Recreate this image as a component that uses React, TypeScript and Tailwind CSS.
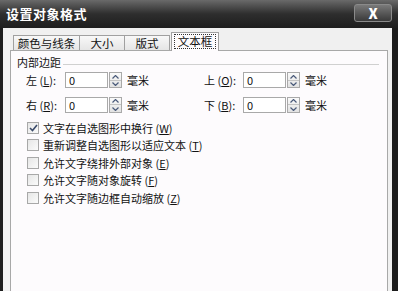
import React from 'react';

const font = { fontFamily: '"Noto Sans CJK SC", "Noto Sans", sans-serif' };

function Key({ k }: { k: string }) {
  return (
    <span>
      (<span className="underline">{k}</span>)
    </span>
  );
}

function Spin() {
  return (
    <div className="ml-px flex h-[16px] w-[13px] flex-col border border-[#a9a9a9] bg-gradient-to-b from-[#fafafa] to-[#e2e2e2]">
      <div className="flex flex-1 items-center justify-center border-b border-[#c4c4c4]">
        <svg width="7" height="4" viewBox="0 0 7 4">
          <path d="M0.5 3.5 L3.5 0.5 L6.5 3.5" fill="none" stroke="#4a5a7a" strokeWidth="1.2" />
        </svg>
      </div>
      <div className="flex flex-1 items-center justify-center">
        <svg width="7" height="4" viewBox="0 0 7 4">
          <path d="M0.5 0.5 L3.5 3.5 L6.5 0.5" fill="none" stroke="#4a5a7a" strokeWidth="1.2" />
        </svg>
      </div>
    </div>
  );
}

function MarginField({ label, k }: { label: string; k: string }) {
  return (
    <div className="flex items-center text-[11px] text-[#111]">
      <span className="w-[39px] whitespace-nowrap">
        {label} <Key k={k} />:
      </span>
      <div className="flex h-[16px] w-[43px] items-center border border-[#a9a9a9] bg-white pl-[3px] text-[11px]">0</div>
      <Spin />
      <span className="ml-[5px]">毫米</span>
    </div>
  );
}

function Check({ label, k, checked }: { label: string; k: string; checked?: boolean }) {
  return (
    <div className="flex h-[17.5px] items-center">
      <div className="flex h-[12px] w-[12px] items-center justify-center border border-[#a8a8a8] bg-gradient-to-br from-[#e6e6e6] to-[#fbfbfb]">
        {checked && (
          <svg width="9" height="8" viewBox="0 0 9 8">
            <path d="M1 4 L3.5 6.5 L8 1" fill="none" stroke="#3a4a6a" strokeWidth="1.6" />
          </svg>
        )}
      </div>
      <span className="ml-[4px] whitespace-nowrap text-[11px] text-[#111]">
        {label} <Key k={k} />
      </span>
    </div>
  );
}

export default function App() {
  const tabs = ['颜色与线条', '大小', '版式'];
  const widths = ['w-[67px]', 'w-[46px]', 'w-[46px]'];

  return (
    <div className="flex h-[291px] w-[398px] flex-col overflow-hidden bg-[#1c1c1c]" style={font}>
      {/* title bar */}
      <div className="relative flex h-[28px] shrink-0 items-center bg-gradient-to-b from-[#6a6a6a] via-[#2e2e2e] to-[#1e1e1e] pl-[6px]">
        <span className="text-[13px] font-bold tracking-[0.5px] text-white">设置对象格式</span>
        <div className="absolute right-[6px] top-[4px] flex h-[18px] w-[38px] items-center justify-center rounded-[3px] border border-[#8a8a8a] bg-gradient-to-b from-[#7a7a7a] to-[#3a3a3a] text-[14px] font-black text-white">
          X
        </div>
      </div>

      {/* body */}
      <div className="ml-[3px] mr-[6px] flex flex-1 flex-col overflow-hidden bg-[#f0f0f0] pl-[7px] pr-[4px]">
        <div className="mt-[4px] flex h-[18px] shrink-0 items-end pl-[3px]">
          {tabs.map((t, i) => (
            <div
              key={t}
              className={`${widths[i]} -mb-px flex h-[16px] items-center justify-center border border-b-0 border-[#a0a0a0] bg-gradient-to-b from-[#f8f8f8] to-[#e4e4e4] text-[11.5px] text-[#111] ${i > 0 ? '-ml-px' : ''}`}
            >
              {t}
            </div>
          ))}
          <div className="relative z-10 -mb-px ml-[1px] flex h-[19px] w-[48px] items-center justify-center border border-b-0 border-[#a0a0a0] bg-[#fdfbfd] px-[2px] pb-[1px]">
            <div className="flex h-[15px] w-full items-center justify-center border border-dotted border-[#333] text-[11.5px] text-[#111]">
              文本框
            </div>
          </div>
        </div>

        <div className="flex h-[260px] shrink-0 flex-col border border-[#a8a8a8] bg-[#fdfbfd] pl-[6px] pt-[5px]">
          <div className="flex h-[12px] items-center">
            <span className="text-[11px] leading-none text-[#111]">内部边距</span>
            <div className="ml-[2px] mr-[8px] mt-[4px] h-px flex-1 bg-[#d0d0d0]" />
          </div>

          <div className="mt-[4px] grid grid-cols-[178px_1fr] gap-y-[8px] pl-[9px]">
            <MarginField label="左" k="L" />
            <MarginField label="上" k="O" />
            <MarginField label="右" k="R" />
            <MarginField label="下" k="B" />
          </div>

          <div className="mt-[6px] flex flex-col pl-[10px]">
            <Check label="文字在自选图形中换行" k="W" checked />
            <Check label="重新调整自选图形以适应文本" k="T" />
            <Check label="允许文字绕排外部对象" k="E" />
            <Check label="允许文字随对象旋转" k="F" />
            <Check label="允许文字随边框自动缩放" k="Z" />
          </div>
        </div>
      </div>
    </div>
  );
}
